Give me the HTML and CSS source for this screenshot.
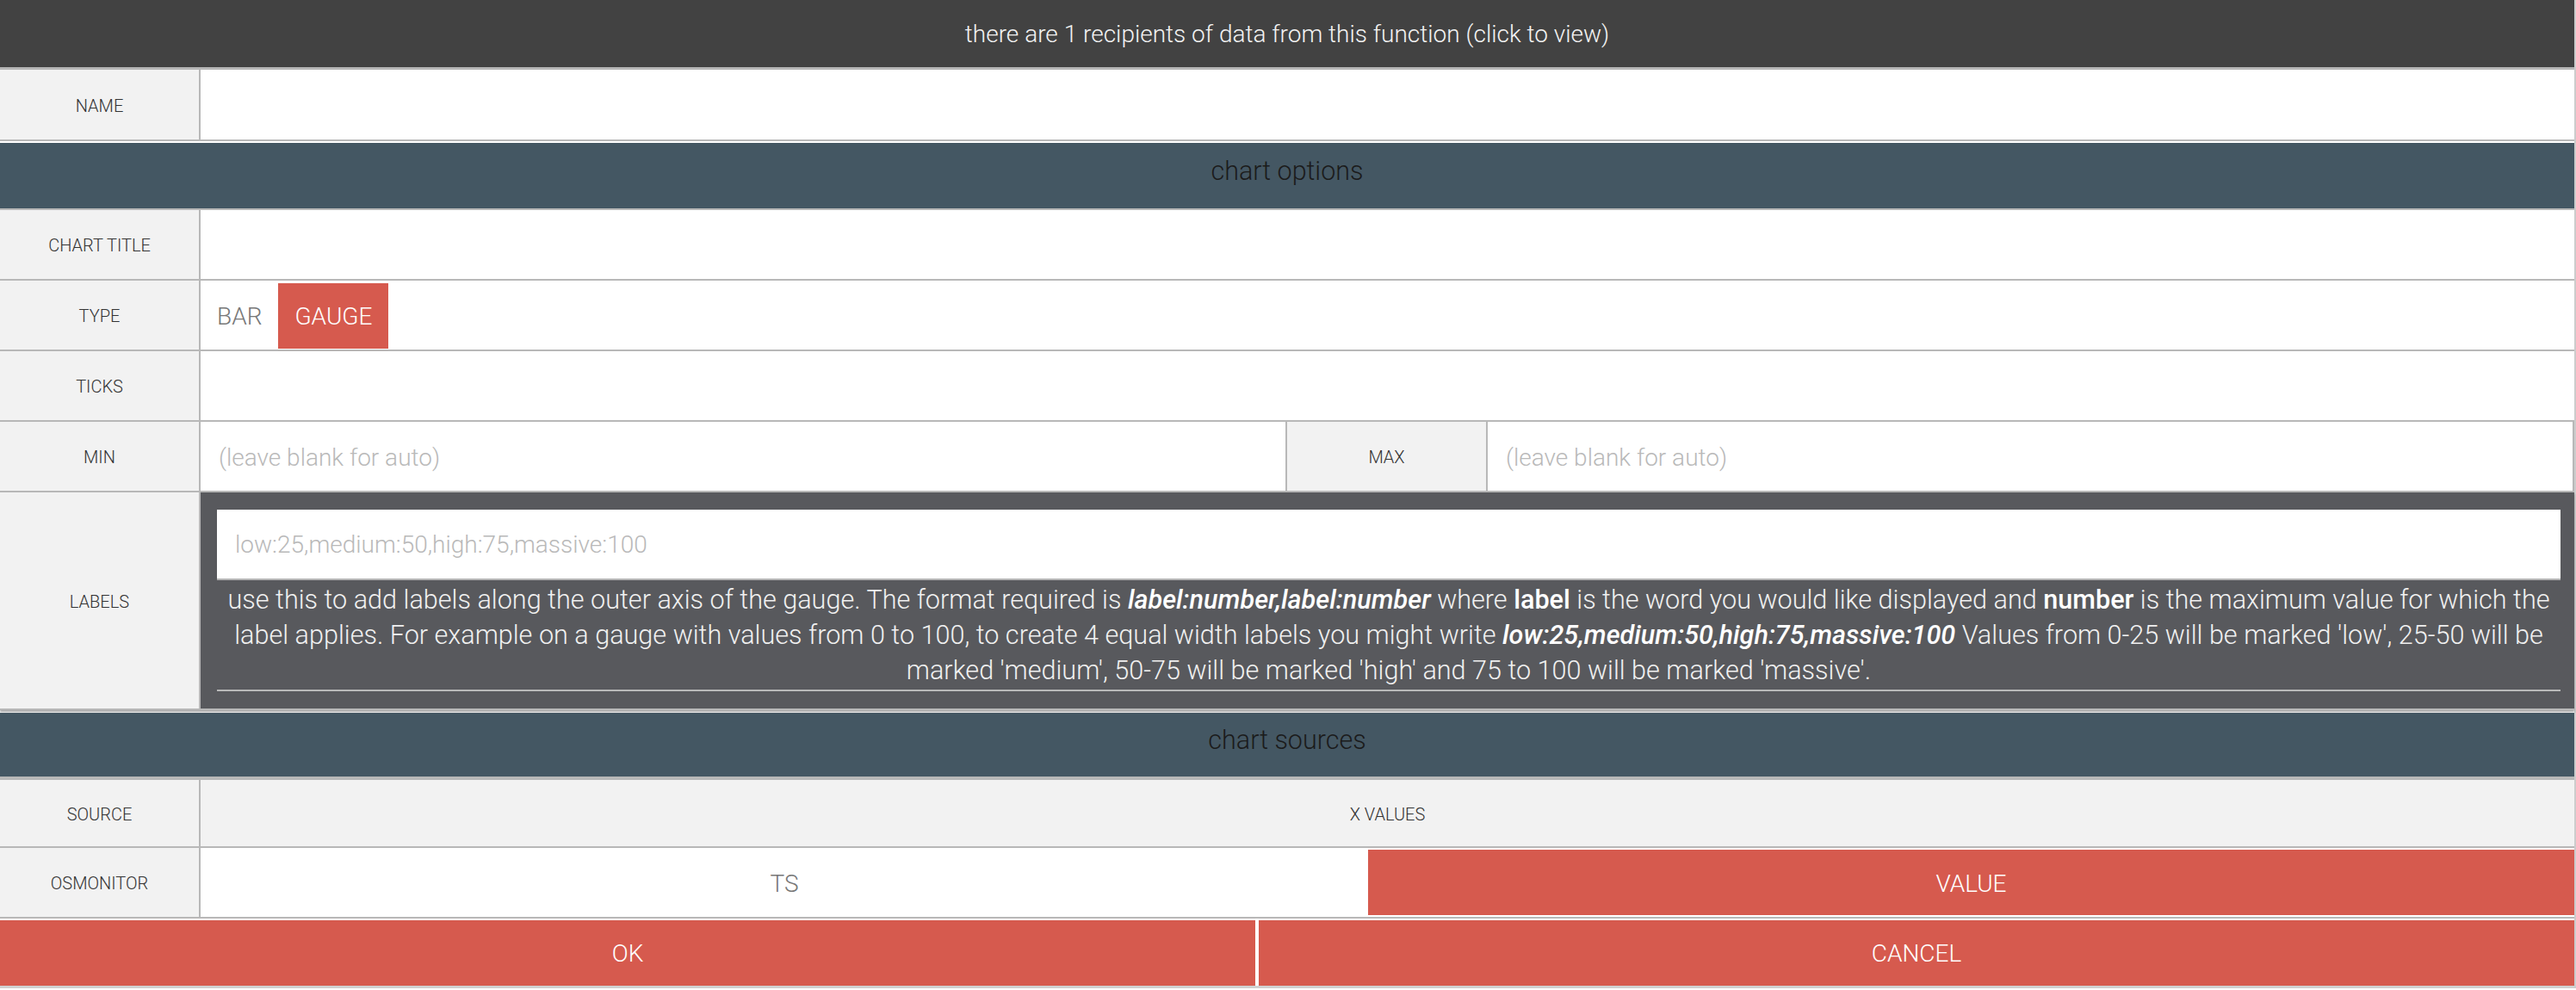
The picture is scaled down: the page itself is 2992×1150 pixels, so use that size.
FILE: index.html
```html
<!DOCTYPE html>
<html>
<head>
<meta charset="utf-8">
<title>chart function</title>
<link rel="stylesheet" href="styles.css">
</head>
<body>
<div class="page">
  <div class="topbar">there are 1 recipients of data from this function (click to view)</div>

  <div class="row first">
    <div class="label">NAME</div>
    <div class="field"></div>
  </div>

  <div class="section">chart options</div>

  <div class="row">
    <div class="label">CHART TITLE</div>
    <div class="field"></div>
  </div>

  <div class="row">
    <div class="label">TYPE</div>
    <div class="field toggles">
      <span class="toggle">BAR</span>
      <span class="toggle active">GAUGE</span>
    </div>
  </div>

  <div class="row">
    <div class="label">TICKS</div>
    <div class="field"></div>
  </div>

  <div class="row quad">
    <div class="label">MIN</div>
    <div class="field placeholder">(leave blank for auto)</div>
    <div class="label">MAX</div>
    <div class="field placeholder">(leave blank for auto)</div>
  </div>

  <div class="row tall">
    <div class="label">LABELS</div>
    <div class="field dark">
      <div class="inputbox">low:25,medium:50,high:75,massive:100</div>
      <p class="help">use this to add labels along the outer axis of the gauge. The format required is <b><i>label:number,label:number</i></b> where <b>label</b> is the word you would like displayed and <b>number</b> is the maximum value for which the<br>label applies. For example on a gauge with values from 0 to 100, to create 4 equal width labels you might write <b><i>low:25,medium:50,high:75,massive:100</i></b> Values from 0-25 will be marked 'low', 25-50 will be<br>marked 'medium', 50-75 will be marked 'high' and 75 to 100 will be marked 'massive'.</p>
      <div class="rule"></div>
    </div>
  </div>

  <div class="section second">chart sources</div>

  <div class="row short">
    <div class="label">SOURCE</div>
    <div class="field grey center">X VALUES</div>
  </div>

  <div class="row">
    <div class="label">OSMONITOR</div>
    <div class="field split">
      <span class="opt">TS</span>
      <span class="opt active">VALUE</span>
    </div>
  </div>

  <div class="actions">
    <span class="btn">OK</span>
    <span class="btn">CANCEL</span>
  </div>
</div>
</body>
</html>
```

FILE: styles.css
```css
html, body {
  margin: 0;
  padding: 0;
  background: #ffffff;
}

body {
  font-family: Roboto, "Liberation Sans", sans-serif;
  font-weight: 300;
  color: #333333;
}

.page {
  width: 2990px;
  border-right: 2px solid #cccccc;
}

.topbar {
  height: 78px;
  background: #424242;
  color: #f2f2f2;
  font-size: 28px;
  display: flex;
  align-items: center;
  justify-content: center;
  border-bottom: 3px solid #b6b6b6;
}

.row {
  display: grid;
  grid-template-columns: 233px 1fr;
  height: 80px;
  border-bottom: 2px solid #b8b8b8;
}

.row.first {
  height: 81px;
}

.row.quad {
  grid-template-columns: 233px 1fr 233px 1fr;
}

.row.tall {
  height: auto;
  border-bottom: 2px solid #b8b8b8;
  box-shadow: 0 2px 2px rgba(0, 0, 0, 0.35);
  margin-bottom: 3px;
}

.row.short {
  height: 77px;
}

.label {
  background: #f2f2f2;
  border-right: 2px solid #b8b8b8;
  font-size: 20px;
  color: #333333;
  display: flex;
  align-items: center;
  justify-content: center;
  padding-top: 2px;
}

.quad .label + .field {
  border-right: 2px solid #b8b8b8;
}

.field {
  background: #ffffff;
  display: flex;
  align-items: center;
  min-width: 0;
}

.field.placeholder {
  color: #b9b9b9;
  font-size: 28px;
  padding-left: 21px;
  padding-top: 3px;
}

.field.grey {
  background: #f2f2f2;
}

.field.center {
  justify-content: center;
  font-size: 20px;
  color: #333333;
  padding-top: 2px;
}

.toggle {
  height: 76px;
  padding: 0 19px;
  display: flex;
  align-items: center;
  font-size: 28px;
  color: #777777;
  margin-top: 2px;
}

.toggle.active {
  background: #d65a4e;
  color: #ffffff;
}

.field.dark {
  background: #58595d;
  display: block;
  padding: 20px 16px 20px 19px;
}

.inputbox {
  height: 80px;
  background: #ffffff;
  border-bottom: 2px solid #b4b4b4;
  color: #b9b9b9;
  font-size: 28px;
  padding-left: 21px;
  display: flex;
  align-items: center;
}

.help {
  margin: 2px 0 2px 0;
  color: #f0f0f0;
  font-size: 30.6px;
  line-height: 41px;
  text-align: center;
  white-space: nowrap;
}

.help b {
  font-weight: 500;
  color: #ffffff;
}

.rule {
  height: 2px;
  background: #b9b9b9;
}

.section {
  margin-top: 2px;
  height: 78px;
  box-sizing: border-box;
  padding-bottom: 12px;
  background: #445763;
  color: #1b1b1b;
  font-size: 30.5px;
  display: flex;
  align-items: center;
  justify-content: center;
  border-bottom: 2px solid #b8b8b8;
}

.section.second {
  height: 78px;
  border-bottom-width: 4px;
}

.split {
  display: grid;
  grid-template-columns: 1355fr 1400fr;
  align-items: stretch;
  padding: 2px 0;
}

.opt {
  display: flex;
  align-items: center;
  justify-content: center;
  font-size: 28px;
  color: #777777;
  padding-top: 2px;
}

.opt.active {
  background: #d65a4e;
  color: #ffffff;
}

.actions {
  margin-top: 2px;
  display: grid;
  grid-template-columns: 1458fr 1528fr;
  column-gap: 4px;
  height: 76px;
  border-bottom: 3px solid #d0d0d0;
}

.btn {
  background: #d65a4e;
  color: #ffffff;
  font-size: 28px;
  display: flex;
  align-items: center;
  justify-content: center;
}
```
